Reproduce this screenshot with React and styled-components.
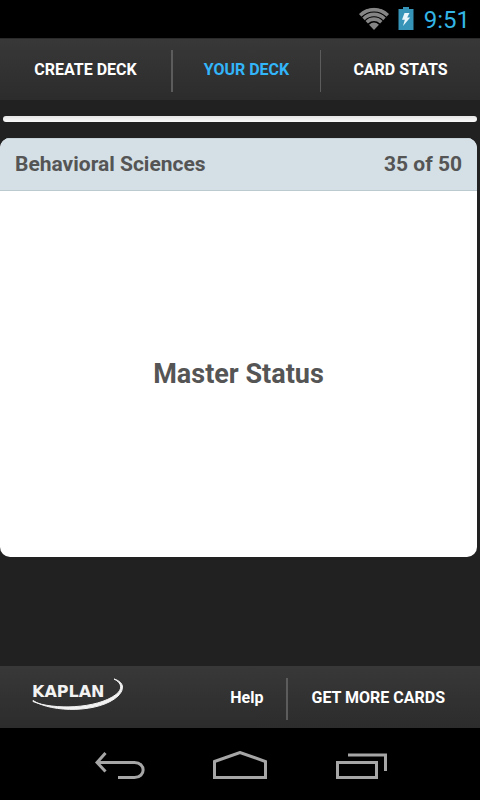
import React from "react";
import styled, { createGlobalStyle } from "styled-components";

const GlobalStyle = createGlobalStyle`
  * { box-sizing: border-box; }
  body {
    margin: 0;
    background: #212121;
    font-family: Roboto, sans-serif;
  }
`;

const Screen = styled.div`
  min-height: 100vh;
  display: flex;
  flex-direction: column;
  background: #212121;
`;

const StatusBar = styled.header`
  height: 38px;
  padding: 0 10px;
  display: flex;
  align-items: center;
  justify-content: flex-end;
  gap: 8px;
  background: #000;
`;

const Clock = styled.time`
  padding: 2px 0 0 2px;
  color: #33b5e5;
  font-size: 24px;
  line-height: 36px;
`;

const Tabs = styled.nav`
  height: 62px;
  padding: 11px 0 9px;
  display: grid;
  grid-template-columns: 173fr 148fr 159fr;
  border-top: 1px solid #2a2a2a;
  background: linear-gradient(#383838, #2c2c2c);
`;

const BarButton = styled.button`
  height: 42px;
  margin: 0;
  padding: 0 ${(p) => p.$pad || 0}px 3px;
  border: 0;
  border-right: ${(p) => p.$divider || 0}px solid #5c5c5c;
  background: none;
  color: ${(p) => (p.$active ? "#33b5fa" : "#fff")};
  font: 700 16px/21px Roboto, sans-serif;
  white-space: nowrap;
  cursor: pointer;
`;

const Progress = styled.div`
  height: 6px;
  margin: 16px 3px;
  border-radius: 3px;
  background: linear-gradient(#e4e4e4, #fafafa);
`;

const Card = styled.main`
  margin-right: 3px;
  flex: 0 1 419px;
  display: flex;
  flex-direction: column;
  border-radius: 10px;
  background: #fff;
  color: #555;
  overflow: hidden;
`;

const CardHeader = styled.div`
  height: 53px;
  padding: 0 15px 2px;
  display: flex;
  align-items: center;
  justify-content: space-between;
  border-top: 1px solid #c6d2d7;
  border-bottom: 1px solid #bccacf;
  background: #d4e0e6;
  font-size: 21px;
  font-weight: 700;
  line-height: 24px;
`;

const Term = styled.h1`
  flex: 1;
  margin: 0;
  display: flex;
  align-items: center;
  justify-content: center;
  font-size: 27px;
  font-weight: 700;
  line-height: 32px;
`;

const Footer = styled.footer`
  height: 62px;
  margin-top: auto;
  padding: 12px 12px 8px 32px;
  display: flex;
  justify-content: space-between;
  background: linear-gradient(#383838, #2c2c2c);
`;

const FooterLinks = styled.div`
  display: flex;
`;

const SystemNav = styled.nav`
  height: 72px;
  padding-left: 2px;
  display: flex;
  align-items: center;
  justify-content: center;
  gap: 68px;
  background: #000;
`;

const NavButton = styled.button`
  display: flex;
  margin: 0;
  padding: 2px 0 0;
  border: 0;
  background: none;
  cursor: pointer;
`;

const WifiIcon = () => (
  <svg width="32" height="24" viewBox="0 0 32 24" aria-label="Wi-Fi">
    <clipPath id="fan">
      <path d="M0 6Q16-5 32 6L16 23Z" />
    </clipPath>
    <g clipPath="url(#fan)" fill="none" stroke="#858585" strokeWidth="3.6">
      <circle cx="16" cy="22" r="19.400" />
      <circle cx="16" cy="22" r="14.600" />
      <circle cx="16" cy="22" r="9.900" />
      <circle cx="16" cy="22" r="6.500" fill="#858585" stroke="none" />
    </g>
  </svg>
);

const BatteryIcon = () => (
  <svg width="16" height="24" viewBox="0 0 16 24" aria-label="Battery charging">
    <path d="M5 0h6v2h4.500v21H.5V2H5z" fill="#3594b8" />
    <path d="M6.500 6h5L9.200 10.500h3L5 19l1.800-6.200H4z" fill="#e8f5fa" />
  </svg>
);

const Logo = () => (
  <svg width="94" height="36" viewBox="0 0 94 36" role="img" aria-label="Kaplan">
    <text x="0" y="19" fill="#f2f2f2" fontFamily="DejaVu Sans, sans-serif" fontSize="16" fontWeight="700">
      KAPLAN
    </text>
    <path
      d="M1 22.500C20 35 68 35 86 18C93 11 92 4 82 1C90 5 91 11 84 16.500C65 31 21 32 1 23.500Z"
      fill="#f2f2f2"
      stroke="#f2f2f2"
      strokeWidth="1"
      strokeLinejoin="round"
    />
  </svg>
);

const BackIcon = () => (
  <svg width="50" height="28" viewBox="0 0 50 28" fill="none" stroke="#a6a6a6" strokeWidth="3">
    <path d="M2 11.500h37.500c11.500 0 11.500 15 0 15H23" />
    <path d="M10.500 2 2 11.500 10.500 20.500" />
  </svg>
);

const HomeIcon = () => (
  <svg width="54" height="28" viewBox="0 0 54 28" fill="none" stroke="#a6a6a6" strokeWidth="3">
    <path d="M1.500 10.500 27 1.500 52.500 10.500V26.500h-51z" />
  </svg>
);

const RecentIcon = () => (
  <svg width="52" height="28" viewBox="0 0 52 28" fill="none" stroke="#a6a6a6" strokeWidth="3">
    <path d="M2.500 11.500h39v15h-39zM13 4h37.500v16" />
  </svg>
);

export default function App() {
  return (
    <Screen>
      <GlobalStyle />
      <StatusBar>
        <WifiIcon />
        <BatteryIcon />
        <Clock>9:51</Clock>
      </StatusBar>
      <Tabs>
        <BarButton $divider={2}>CREATE DECK</BarButton>
        <BarButton $divider={1} $active>YOUR DECK</BarButton>
        <BarButton>CARD STATS</BarButton>
      </Tabs>
      <Progress role="progressbar" aria-label="Deck progress" />
      <Card>
        <CardHeader>
          <span>Behavioral Sciences</span>
          <span>35 of 50</span>
        </CardHeader>
        <Term>Master Status</Term>
      </Card>
      <Footer>
        <Logo />
        <FooterLinks>
          <BarButton $divider={2} $pad={23}>Help</BarButton>
          <BarButton $pad={23}>GET MORE CARDS</BarButton>
        </FooterLinks>
      </Footer>
      <SystemNav>
        <NavButton aria-label="Back"><BackIcon /></NavButton>
        <NavButton aria-label="Home"><HomeIcon /></NavButton>
        <NavButton aria-label="Recent apps"><RecentIcon /></NavButton>
      </SystemNav>
    </Screen>
  );
}
